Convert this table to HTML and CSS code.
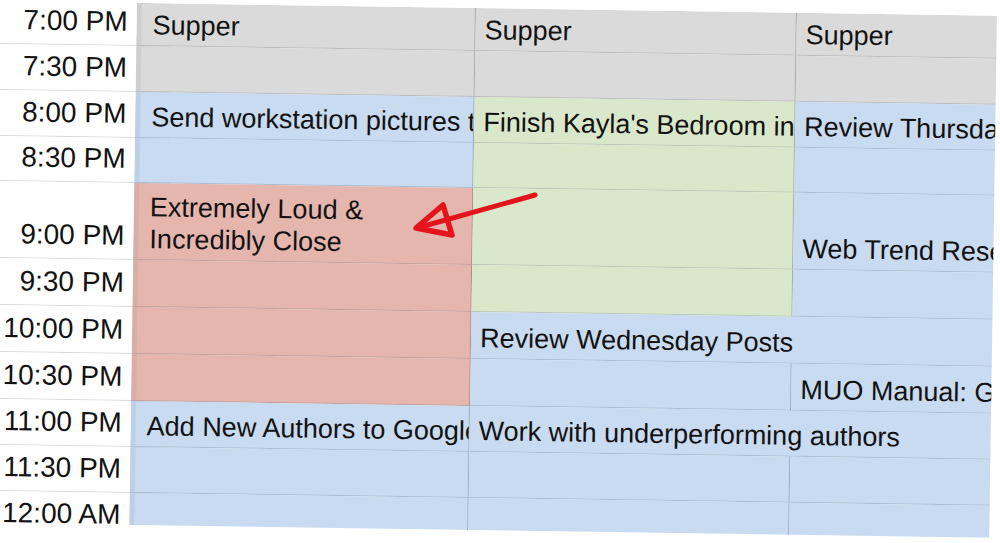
FILE: index.html
```html
<!DOCTYPE html>
<html>
<head>
<meta charset="utf-8">
<link rel="stylesheet" href="styles.css">
</head>
<body>
<div class="page">
  <div class="sheet">
    <div class="t">7:00 PM</div>
    <div class="c gray first">Supper</div>
    <div class="c gray">Supper</div>
    <div class="c gray last">Supper</div>

    <div class="t">7:30 PM</div>
    <div class="c gray first"></div>
    <div class="c gray"></div>
    <div class="c gray last"></div>

    <div class="t">8:00 PM</div>
    <div class="c blue first">Send workstation pictures to Ryan</div>
    <div class="c green">Finish Kayla's Bedroom in Minecraft</div>
    <div class="c blue last">Review Thursday Posts</div>

    <div class="t">8:30 PM</div>
    <div class="c blue first"></div>
    <div class="c green"></div>
    <div class="c blue last"></div>

    <div class="t">9:00 PM</div>
    <div class="c red first wrap">Extremely Loud &amp; Incredibly Close</div>
    <div class="c green"></div>
    <div class="c blue last">Web Trend Research</div>

    <div class="t">9:30 PM</div>
    <div class="c red first"></div>
    <div class="c green"></div>
    <div class="c blue last"></div>

    <div class="t">10:00 PM</div>
    <div class="c red first"></div>
    <div class="c blue span2 last">Review Wednesday Posts</div>

    <div class="t">10:30 PM</div>
    <div class="c red first"></div>
    <div class="c blue"></div>
    <div class="c blue last">MUO Manual: Google Drive</div>

    <div class="t">11:00 PM</div>
    <div class="c blue first">Add New Authors to Google Docs</div>
    <div class="c blue span2 last">Work with underperforming authors</div>

    <div class="t">11:30 PM</div>
    <div class="c blue first"></div>
    <div class="c blue"></div>
    <div class="c blue last"></div>

    <div class="t">12:00 AM</div>
    <div class="c blue first"></div>
    <div class="c blue"></div>
    <div class="c blue last"></div>
  </div>

  <svg class="arrow" width="140" height="60" viewBox="0 0 140 60">
    <line x1="133" y1="15" x2="22" y2="46" stroke="#e3141b" stroke-width="5" stroke-linecap="round"/>
    <polygon points="14,48 41,25 50,55" fill="none" stroke="#e3141b" stroke-width="5.5" stroke-linejoin="round"/>
  </svg>
</div>
</body>
</html>
```

FILE: styles.css
```css
html, body {
  margin: 0;
  padding: 0;
  background: #ffffff;
}

.page {
  position: relative;
  width: 1000px;
  height: 543px;
  overflow: hidden;
  background: #ffffff;
}

.sheet {
  display: grid;
  grid-template-columns: 137px 339px 321px 200px;
  grid-template-rows: 43px 46px 46px 45px 77px 47px 47px 47px 46px 46px 46px;
  height: 522px;
  overflow: hidden;
  margin-top: 3px;
  transform: rotate(0.85deg);
  transform-origin: 137px 0;
  font-family: "Liberation Sans", Arial, sans-serif;
  color: #121212;
}

.t {
  background: #ffffff;
  border-bottom: 1px solid #d9d9d9;
  font-size: 28px;
  line-height: 32px;
  text-align: right;
  padding: 0 9px 7px 0;
  display: flex;
  align-items: flex-end;
  justify-content: flex-end;
  white-space: nowrap;
  box-sizing: border-box;
}

.c {
  font-size: 27px;
  line-height: 32px;
  padding: 0 4px 4px 9px;
  white-space: nowrap;
  overflow: hidden;
  display: flex;
  align-items: flex-end;
  box-sizing: border-box;
  border-bottom: 1px solid rgba(60, 70, 90, 0.2);
  border-right: 1px solid rgba(50, 60, 80, 0.32);
}

.c.first {
  padding-left: 16px;
  box-shadow: inset 5px 0 0 rgba(90, 100, 120, 0.09);
}

.c.last {
  border-right: none;
}

.c.span2 {
  grid-column: span 2;
}

.c.wrap {
  white-space: normal;
}

.gray { background: #dadada; }
.blue { background: #c8dbf1; }
.green { background: #d9e7cb; }
.red { background: #e5b6ad; }

.arrow {
  position: absolute;
  left: 402px;
  top: 180px;
}
```
